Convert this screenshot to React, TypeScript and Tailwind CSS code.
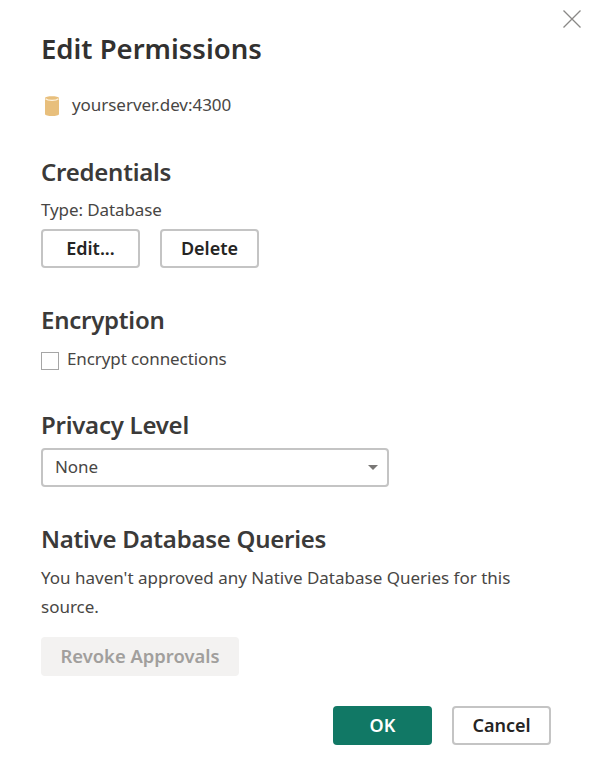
const font = "font-['Noto_Sans',sans-serif]";

function Heading({ children, className }: { children: string; className: string }) {
  return (
    <h2 className={`text-[24px] leading-[32px] font-semibold tracking-[-0.25px] text-[#3b3a39] ${className}`}>
      {children}
    </h2>
  );
}

function Button({ children, className }: { children: string; className: string }) {
  return (
    <button className={`h-[39px] rounded-[4px] border-2 border-[#c4c4c4] bg-white text-[18px] font-semibold text-[#252423] ${className}`}>
      {children}
    </button>
  );
}

export default function App() {
  return (
    <div className={`relative w-[596px] h-[783px] bg-white pl-[41px] pt-[31px] ${font}`}>
      {/* close */}
      <svg className="absolute top-[10px] right-[15px]" width="18" height="18" viewBox="0 0 18 18" fill="none" stroke="#8a8886" strokeWidth="1.3">
        <path d="M0.5 0.5 L17.5 17.5 M17.5 0.5 L0.5 17.5" />
      </svg>

      <h1 className="text-[27.5px] leading-[36px] font-semibold text-[#323130]">Edit Permissions</h1>

      <div className="mt-[26px] flex items-center h-[24px]">
        <svg width="16" height="23" viewBox="0 0 16 23" className="ml-[3px]">
          <path d="M1 4 C1 1.5 15 1.5 15 4 V20 C15 22.8 1 22.8 1 20 Z" fill="#e8bf7c" />
          <path d="M1.5 4.8 C4 7 12 7 14.5 4.8" fill="none" stroke="#fdf3e0" strokeWidth="1.2" />
        </svg>
        <span className="ml-[12px] text-[17px] tracking-[-0.05px] text-[#484644]">yourserver.dev:4300</span>
      </div>

      <Heading className="mt-[39px]">Credentials</Heading>
      <p className="mt-[11px] text-[17px] leading-[22px] tracking-[-0.1px] text-[#484644]">Type: Database</p>
      <div className="mt-[8px] flex gap-[20px]">
        <Button className="w-[99px]">Edit...</Button>
        <Button className="w-[99px]">Delete</Button>
      </div>

      <Heading className="mt-[36px]">Encryption</Heading>
      <div className="mt-[11px] flex items-start h-[26px]">
        <span className="mt-[5px] block size-[18px] border border-[#a6a6a6] bg-white" />
        <span className="ml-[8px] mt-px text-[17px] leading-[22px] tracking-[-0.1px] text-[#484644]">Encrypt connections</span>
      </div>

      <Heading className="mt-[36px]">Privacy Level</Heading>
      <div className="mt-[7px] flex items-center justify-between w-[348px] h-[39px] rounded-[4px] border-2 border-[#c4c4c4] bg-white pl-[12px] pr-[9px]">
        <span className="mb-[2px] text-[17px] tracking-[-0.1px] text-[#484644]">None</span>
        <svg width="10" height="5" viewBox="0 0 10 5"><path d="M0 0 H10 L5 5 Z" fill="#797775" /></svg>
      </div>

      <Heading className="mt-[36px]">Native Database Queries</Heading>
      <p className="mt-[8px] w-[490px] text-[17px] leading-[29px] text-[#484644]">
        You haven't approved any Native Database Queries for this source.
      </p>
      <button className="mt-[16px] block w-[198px] h-[39px] rounded-[4px] bg-[#f3f2f1] pb-[2px] text-[18.4px] font-semibold text-[#a19f9d]">
        Revoke Approvals
      </button>

      <div className="mt-[30px] ml-[292px] flex gap-[20px]">
        <button className="w-[99px] h-[39px] rounded-[4px] bg-[#117865] text-[18px] font-semibold text-white">OK</button>
        <Button className="w-[99px]">Cancel</Button>
      </div>
    </div>
  );
}
